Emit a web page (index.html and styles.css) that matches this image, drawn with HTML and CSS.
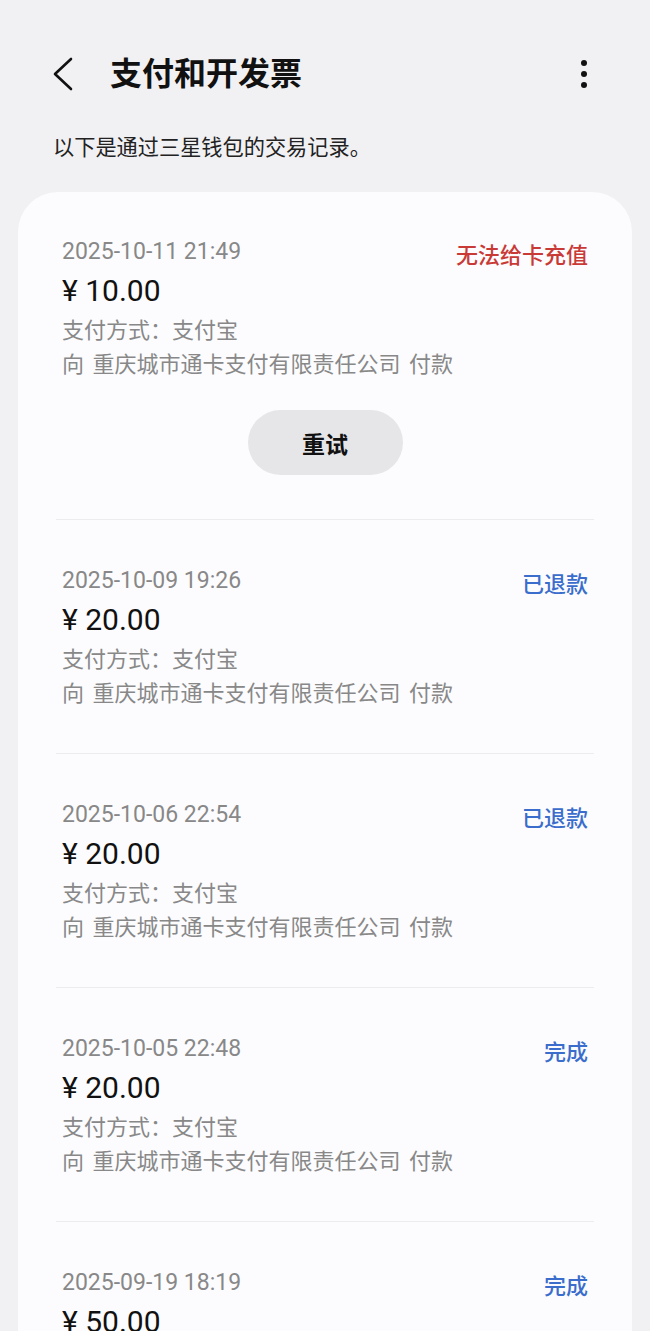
FILE: index.html
```html
<!DOCTYPE html>
<html lang="zh-CN">
<head>
  <meta charset="UTF-8">
  <meta name="viewport" content="width=device-width, initial-scale=1.0">
  <title>支付和开发票</title>
  <link rel="stylesheet" href="styles.css">
</head>
<body>
  <header class="app-bar">
    <button class="back" type="button" aria-label="返回">
      <svg width="24" height="36" viewBox="0 0 24 36">
        <path d="M19 3 L3 18 L19 33" fill="none" stroke="#111" stroke-width="2.6" stroke-linecap="round" stroke-linejoin="round"/>
      </svg>
    </button>
    <h1>支付和开发票</h1>
    <button class="more" type="button" aria-label="更多">
      <svg width="10" height="32" viewBox="0 0 10 32">
        <circle cx="5" cy="5" r="3"/>
        <circle cx="5" cy="16" r="3"/>
        <circle cx="5" cy="27" r="3"/>
      </svg>
    </button>
  </header>

  <p class="intro">以下是通过三星钱包的交易记录。</p>

  <main class="card">
    <div class="txn">
      <div class="txn-top">
        <span class="date">2025-10-11 21:49</span>
        <span class="status failed">无法给卡充值</span>
      </div>
      <div class="amount">¥ 10.00</div>
      <div class="meta">支付方式：支付宝</div>
      <div class="meta">向 重庆城市通卡支付有限责任公司 付款</div>
      <div class="retry-row">
        <button class="retry" type="button">重试</button>
      </div>
    </div>

    <div class="txn">
      <div class="txn-top">
        <span class="date">2025-10-09 19:26</span>
        <span class="status">已退款</span>
      </div>
      <div class="amount">¥ 20.00</div>
      <div class="meta">支付方式：支付宝</div>
      <div class="meta">向 重庆城市通卡支付有限责任公司 付款</div>
    </div>

    <div class="txn">
      <div class="txn-top">
        <span class="date">2025-10-06 22:54</span>
        <span class="status">已退款</span>
      </div>
      <div class="amount">¥ 20.00</div>
      <div class="meta">支付方式：支付宝</div>
      <div class="meta">向 重庆城市通卡支付有限责任公司 付款</div>
    </div>

    <div class="txn">
      <div class="txn-top">
        <span class="date">2025-10-05 22:48</span>
        <span class="status">完成</span>
      </div>
      <div class="amount">¥ 20.00</div>
      <div class="meta">支付方式：支付宝</div>
      <div class="meta">向 重庆城市通卡支付有限责任公司 付款</div>
    </div>

    <div class="txn">
      <div class="txn-top">
        <span class="date">2025-09-19 18:19</span>
        <span class="status">完成</span>
      </div>
      <div class="amount">¥ 50.00</div>
      <div class="meta">支付方式：支付宝</div>
      <div class="meta">向 重庆城市通卡支付有限责任公司 付款</div>
    </div>
  </main>
</body>
</html>
```

FILE: styles.css
```css
body {
  margin: 0;
  background-color: #f1f1f3;
  font-family: Roboto, "Noto Sans CJK SC", sans-serif;
  color: #111;
  overflow: hidden;
}
.app-bar {
  display: flex;
  align-items: center;
  height: 56px;
  margin-top: 46px;
  padding: 0 61px 0 52px;
}
.app-bar button {
  background: none;
  border: none;
  padding: 0;
  cursor: pointer;
  display: flex;
}
.back {
  margin-right: 34px;
}
h1 {
  flex: 1;
  margin: 0;
  font-size: 32px;
  font-weight: bold;
  line-height: 40px;
}
.more svg {
  fill: #111;
}
.intro {
  margin: 31px 0 29px 53px;
  font-size: 21.2px;
  line-height: 30px;
  color: #222;
}
.card {
  margin: 0 18px;
  padding: 0 38px;
  background-color: #fcfcfe;
  border-radius: 40px 40px 0 0;
  min-height: 1200px;
}
.txn {
  padding: 45px 6px 42px;
  border-bottom: 1px solid #ececee;
}
.txn:first-child {
  padding-top: 44px;
  padding-bottom: 44px;
}
.txn-top {
  display: flex;
  justify-content: space-between;
  align-items: center;
  height: 30px;
}
.date {
  font-size: 23px;
  color: #888;
}
.status {
  font-size: 22px;
  font-weight: 500;
  color: #3a6dcc;
  margin-top: 4px;
}
.status.failed {
  color: #c93a36;
}
.amount {
  margin-top: 5px;
  font-size: 30px;
  line-height: 40px;
}
.meta {
  font-size: 22px;
  line-height: 34px;
  word-spacing: 3px;
  color: #888;
}
.amount + .meta {
  margin-top: 3px;
}
.retry-row {
  display: flex;
  justify-content: center;
  margin-top: 28px;
}
.retry {
  width: 155px;
  height: 65px;
  border: none;
  border-radius: 33px;
  background-color: #e6e6e8;
  font-family: inherit;
  font-size: 23px;
  font-weight: bold;
  color: #111;
}
```
